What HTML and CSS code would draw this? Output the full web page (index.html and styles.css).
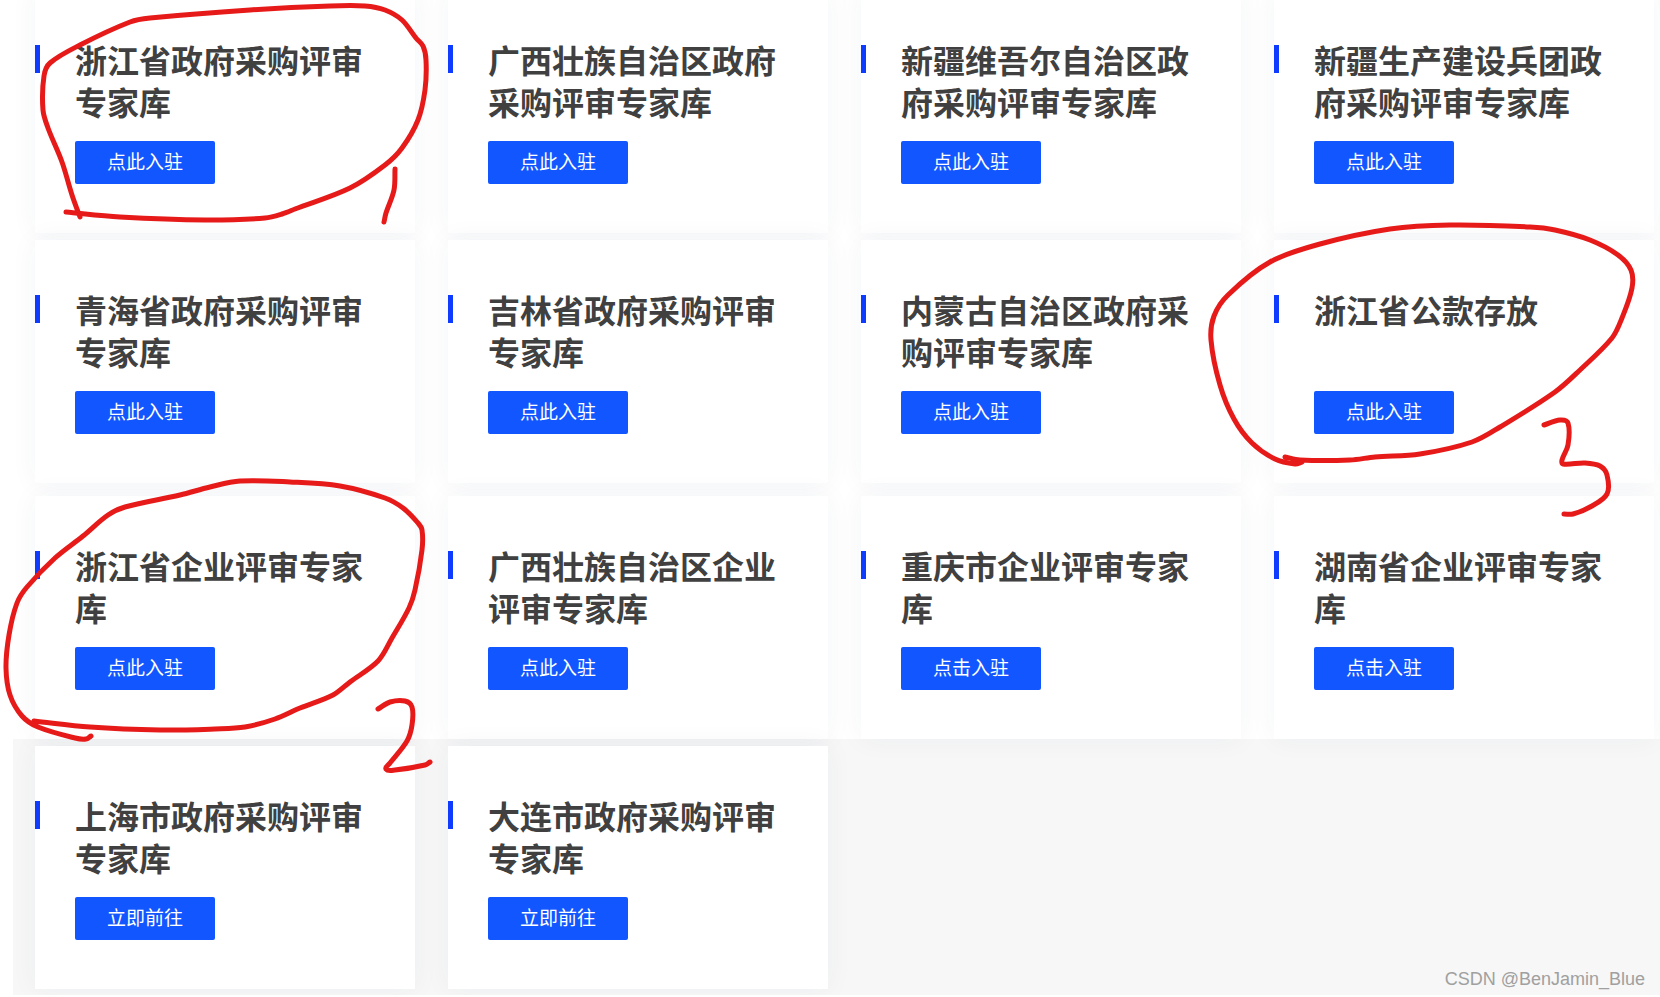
FILE: index.html
```html
<!DOCTYPE html>
<html lang="zh-CN">
<head>
<meta charset="utf-8">
<title>专家库入驻</title>
<link rel="stylesheet" href="styles.css">
</head>
<body>
<main class="page">
  <section class="group group-first">
    <article class="card"><h2 class="title">浙江省政府采购评审专家库</h2><button class="enter" type="button">点此入驻</button></article>
    <article class="card"><h2 class="title">广西壮族自治区政府采购评审专家库</h2><button class="enter" type="button">点此入驻</button></article>
    <article class="card"><h2 class="title">新疆维吾尔自治区政府采购评审专家库</h2><button class="enter" type="button">点此入驻</button></article>
    <article class="card"><h2 class="title">新疆生产建设兵团政府采购评审专家库</h2><button class="enter" type="button">点此入驻</button></article>
    <article class="card"><h2 class="title">青海省政府采购评审专家库</h2><button class="enter" type="button">点此入驻</button></article>
    <article class="card"><h2 class="title">吉林省政府采购评审专家库</h2><button class="enter" type="button">点此入驻</button></article>
    <article class="card"><h2 class="title">内蒙古自治区政府采购评审专家库</h2><button class="enter" type="button">点此入驻</button></article>
    <article class="card"><h2 class="title">浙江省公款存放</h2><button class="enter" type="button">点此入驻</button></article>
  </section>
  <section class="group">
    <article class="card"><h2 class="title">浙江省企业评审专家库</h2><button class="enter" type="button">点此入驻</button></article>
    <article class="card"><h2 class="title">广西壮族自治区企业评审专家库</h2><button class="enter" type="button">点此入驻</button></article>
    <article class="card"><h2 class="title">重庆市企业评审专家库</h2><button class="enter" type="button">点击入驻</button></article>
    <article class="card"><h2 class="title">湖南省企业评审专家库</h2><button class="enter" type="button">点击入驻</button></article>
  </section>
  <section class="group group-gray">
    <article class="card"><h2 class="title">上海市政府采购评审专家库</h2><button class="enter" type="button">立即前往</button></article>
    <article class="card"><h2 class="title">大连市政府采购评审专家库</h2><button class="enter" type="button">立即前往</button></article>
  </section>
  <svg class="ink" viewBox="0 0 1660 997" aria-hidden="true"></svg>
  <p class="credit">CSDN @BenJamin_Blue</p>
</main>
<script src="ink.js"></script>
</body>
</html>
```
FILE: styles.css
```css
* { box-sizing: border-box; }

body {
  margin: 0;
  background: #fff;
  font-family: "Liberation Sans", "Noto Sans CJK SC", sans-serif;
}

.page {
  position: relative;
  overflow: hidden;
}

.group {
  display: grid;
  grid-template-columns: repeat(4, 1fr);
  gap: 7px 33px;
  margin: 13px 0 0 13px;
  padding: 0 6px 0 22px;
}

.group-first { margin-top: -10px; }

.group-gray {
  margin-top: 0;
  padding-top: 7px;
  padding-bottom: 6px;
  background: #f7f7f7;
}

.card {
  position: relative;
  height: 243px;
  padding: 48px 40px 0;
  background: #fff;
  box-shadow: 0 0 26px rgba(20, 60, 100, 0.05);
}

.card::before {
  content: "";
  position: absolute;
  top: 55px;
  left: 0;
  width: 5px;
  height: 28px;
  background: #0f3bff;
}

.title {
  height: 84px;
  margin: 0 0 19px;
  color: #404040;
  font-family: "Noto Sans CJK SC", sans-serif;
  font-size: 32px;
  font-weight: 700;
  line-height: 42px;
}

.enter {
  display: block;
  height: 43px;
  padding: 0 32px 3px;
  border: 0;
  border-radius: 2px;
  background: #1256ff;
  color: #fff;
  font-family: "Noto Sans CJK SC", sans-serif;
  font-size: 19px;
  font-weight: 400;
  line-height: 40px;
  white-space: nowrap;
}

.ink {
  position: absolute;
  top: 0;
  left: 0;
  width: 1660px;
  height: 997px;
  fill: none;
  stroke: #e71a1a;
  stroke-width: 5;
  stroke-linecap: round;
  stroke-linejoin: round;
  pointer-events: none;
}

.credit {
  position: absolute;
  right: 15px;
  bottom: 5px;
  margin: 0;
  color: #a0a0a0;
  font-family: "Liberation Sans", sans-serif;
  font-size: 18px;
  line-height: 22px;
}
```
FILE: ink.js
```js
// Pen strokes, each a list of x,y points joined by a smooth curve.
const strokes = [
  "66,212 120,217 205,220 265,218 282,214 295,209 350,188 385,165 402,148 418,120 425,90 426,60 423,46 416,38 402,20 385,10 365,6 330,6 250,10 150,18 130,22 80,45 50,63 44,76 43,110 48,128 62,162 72,195 80,217",
  "395,169 394,190 386,213 384,222",
  "34,721 90,727 160,730 215,729 245,727 275,719 300,708 333,695 350,682 378,661 392,638 409,608 415,590 422,550 422,530 418,523 403,508 385,498 340,486 290,482 240,481 210,487 180,495 125,507 108,515 83,536 55,558 27,587 17,603 9,635 6,668 10,695 22,716 38,727 75,738 86,739 91,736",
  "378,709 390,702 405,701 412,707 412,725 407,741 390,763 386,769 395,770 425,765 430,762",
  "1285,457 1300,460 1350,460 1375,457 1420,454 1472,442 1500,427 1555,392 1580,370 1612,338 1622,318 1632,288 1631,270 1618,255 1590,240 1555,230 1530,227 1450,225 1390,229 1320,244 1270,262 1228,295 1214,316 1211,340 1220,385 1234,419 1252,443 1275,459 1295,464 1302,462",
  "1544,425 1560,420 1568,423 1568,445 1562,460 1563,464 1585,463 1600,466 1607,475 1607,494 1590,507 1573,514 1564,514"
];

const ink = document.querySelector(".ink");

function curve(points) {
  let d = "M" + points[0].join(" ");
  for (let i = 0; i < points.length - 1; i++) {
    const p0 = points[Math.max(i - 1, 0)];
    const p1 = points[i];
    const p2 = points[i + 1];
    const p3 = points[Math.min(i + 2, points.length - 1)];
    const length = (a, b) => Math.hypot(b[0] - a[0], b[1] - a[1]);
    const step = length(p1, p2) / 3;
    const before = length(p0, p2) || 1;
    const after = length(p1, p3) || 1;
    const c1 = [0, 1].map(k => p1[k] + (p2[k] - p0[k]) / before * step);
    const c2 = [0, 1].map(k => p2[k] - (p3[k] - p1[k]) / after * step);
    d += " C" + [...c1, ...c2, ...p2].map(v => v.toFixed(1)).join(" ");
  }
  return d;
}

for (const stroke of strokes) {
  const path = document.createElementNS("http://www.w3.org/2000/svg", "path");
  path.setAttribute("d", curve(stroke.split(" ").map(p => p.split(",").map(Number))));
  ink.append(path);
}
```
